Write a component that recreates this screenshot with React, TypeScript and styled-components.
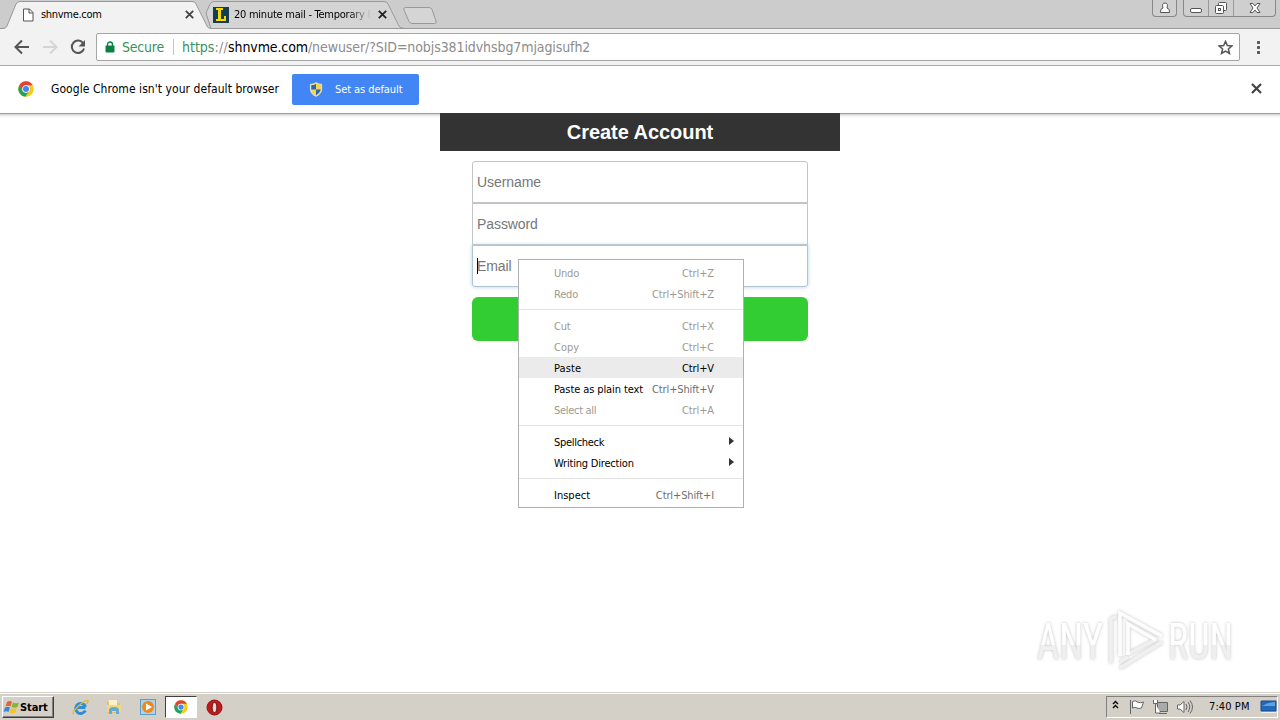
import React from "react";
import styled, { createGlobalStyle } from "styled-components";

const Global = createGlobalStyle`
  * { box-sizing: border-box; }
  body { margin: 0; background: #fff; overflow: hidden; }
`;
const ui = `"DejaVu Sans Condensed", "DejaVu Sans", sans-serif`;

const Screen = styled.div`
  width: 1280px; height: 720px; display: flex; flex-direction: column;
  position: relative; overflow: hidden; font-family: ${ui};
  font-stretch: condensed; font-size: 11px; color: #000; background: #fff;
`;
const Label = styled.span<{ $size?: number; $space?: number; $color?: string }>`
  font-size: ${(p) => p.$size ?? 11}px;
  letter-spacing: ${(p) => p.$space ?? 0}px;
  color: ${(p) => p.$color ?? "inherit"};
  white-space: pre; line-height: 16px;
`;

/* Tab strip */
const TabStrip = styled.div`
  height: 29px; flex: none; background: #ccc; border-bottom: 1px solid #999;
  display: flex; align-items: flex-start; justify-content: space-between;
`;
const TabGroup = styled.div`display: flex;`;
const Tab = styled.div<{ $width: number; $overlap?: number; $front?: boolean }>`
  width: ${(p) => p.$width}px; height: 29px; margin-left: -${(p) => p.$overlap ?? 0}px;
  position: relative; z-index: ${(p) => (p.$front ? 2 : 1)};
`;
const TabShape = styled.svg`position: absolute; inset: 0; display: block;`;
const TabContent = styled.div<{ $left: number; $right: number }>`
  position: relative; display: flex; align-items: center; height: 28px;
  padding: 1px ${(p) => p.$right}px 0 ${(p) => p.$left}px;
`;
const TabTitle = styled.div<{ $gap: number; $fade?: boolean }>`
  flex: 1; min-width: 0; overflow: hidden; margin-left: ${(p) => p.$gap}px; display: flex;
  ${(p) => p.$fade && "mask-image: linear-gradient(90deg, #000 115px, transparent 137px);"}
`;
const NewTab = styled.svg`margin: 7px 0 0 -8px; display: block;`;
const WindowButtons = styled.div`display: flex; gap: 6px; padding-right: 4px;`;
const ButtonSet = styled.div`
  display: flex; height: 17px; border: 1px solid #888; border-top: 0; border-radius: 0 0 4px 4px; background: #cfcfcf;
`;
const WinButton = styled.div<{ $width: number }>`
  width: ${(p) => p.$width}px; display: flex; justify-content: center; align-items: center;
  & + & { border-left: 1px solid #999; }
`;

/* Toolbar */
const Toolbar = styled.div`
  height: 37px; flex: none; background: #f2f2f2; border-bottom: 1px solid #aaa;
  display: flex; align-items: center; padding: 0 15px 0 14px;
`;
const NavIcons = styled.div`display: flex; gap: 12px; width: 82px;`;
const AddressBar = styled.div`
  width: 1144px; height: 28px; background: #fff; border: 1px solid #a5a5a5; border-radius: 2px;
  display: flex; align-items: center; padding: 0 6px 0 8px;
`;
const Secure = styled.div`margin-left: 7px; width: 42px; display: flex;`;
const Divider = styled.i`width: 1px; height: 16px; background: #c4c4c4; margin: 0 8px 0 9px;`;
const Url = styled.div`flex: 1; display: flex;`;
const MenuDots = styled.svg`margin-left: 14px;`;

/* Default browser bar */
const InfoBar = styled.div`
  height: 47px; flex: none; background: #fff; display: flex; align-items: center; padding: 0 18px 2px;
`;
const Message = styled.div`margin-left: 17px; width: 241px; display: flex;`;
const DefaultButton = styled.div`
  width: 127px; height: 31px; margin-top: 1px; border-radius: 2px; background: #4285f4; color: #fff;
  display: flex; align-items: center; padding: 1px 0 0 17px; gap: 12px;
`;
const Spacer = styled.div`flex: 1;`;

/* Page */
const Page = styled.main`
  flex: 1; display: flex; flex-direction: column; align-items: center; background:
  linear-gradient(#9b9b9b 0, #9b9b9b 1px, #d0d0d0 1px, #f2f2f2 3px, #fff 5px);
`;
const Heading = styled.h1`
  margin: 0; width: 400px; height: 38px; background: #333; color: #fff; text-align: center;
  font: bold 20px/38px "Liberation Sans", Arial, sans-serif; letter-spacing: -0.05px;
`;
const Form = styled.form`width: 336px; margin-top: 10px; display: flex; flex-direction: column;`;
const Field = styled.div<{ $pos?: "top" | "bottom" }>`
  height: 42px; border: 1px solid #c4c4c4; background: #fff; color: #777; display: flex; align-items: center;
  padding-left: 4px; font: 14px "Liberation Sans", Arial, sans-serif; letter-spacing: -0.08px;
  border-radius: ${(p) => (p.$pos === "top" ? "3px 3px 0 0" : p.$pos === "bottom" ? "0 0 3px 3px" : "0")};
  ${(p) => p.$pos === "bottom" && "border-color: #b0c4d0; box-shadow: 0 0 4px #b4d3e6;"}
`;
const Caret = styled.i`width: 1px; height: 16px; background: #000; margin-right: -1px;`;
const Submit = styled.div`height: 44px; margin-top: 10px; border-radius: 6px; background: #32cd32;`;

/* Context menu */
const Menu = styled.div`
  position: absolute; left: 518px; top: 259px; width: 226px; height: 249px; background: #fff;
  border: 1px solid #b0b0b0; padding: 2px 0; z-index: 5;
`;
const MenuRow = styled.div<{ $active?: boolean; $disabled?: boolean }>`
  height: 21px; display: flex; align-items: center; justify-content: space-between; padding: 2px 29px 0 35px;
  background: ${(p) => (p.$active ? "#ebebeb" : "transparent")};
  color: ${(p) => (p.$disabled ? "#9d9a8e" : "#000")};
`;
const Separator = styled.div`height: 11px; padding-top: 5px; &::after { content: ""; display: block; height: 1px; background: #e2e2e2; }`;
const Arrow = styled.i`
  border: 4px solid transparent; border-left: 5px solid #333; border-right: 0; margin: -3px -20px 0 0;
`;

const Watermark = styled.svg`position: absolute; left: 1030px; top: 603px;`;

/* Taskbar */
const Taskbar = styled.footer`
  height: 28px; flex: none; background: #d4d0c8; border-top: 1px solid #d4d0c8; box-shadow: inset 0 1px #fff;
  display: flex; align-items: center; padding: 1px 0 0 2px;
`;
const Start = styled.div`
  width: 52px; height: 22px; border: 1px solid; border-color: #fff #404040 #404040 #fff;
  box-shadow: inset -1px -1px #808080; display: flex; align-items: center;
  font: bold 11px ${ui}; font-stretch: condensed; letter-spacing: -0.1px;
`;
const Launchers = styled.div`display: flex; align-items: center; margin-left: 9px; flex: 1;`;
const Launcher = styled.div<{ $active?: boolean }>`
  width: ${(p) => (p.$active ? 32 : 34)}px; height: 22px; display: flex; align-items: center; justify-content: center;
  ${(p) => p.$active && "background: #fff; border: 1px solid; border-color: #404040 #fff #fff #404040;"}
`;
const Tray = styled.div`
  width: 172px; height: 22px; border: 1px solid; border-color: #808080 #fff #fff #808080; margin-right: 2px;
  display: flex; align-items: center; padding-left: 5px;
`;
const Clock = styled.div`margin-left: 13px; display: flex;`;

const Close = ({ color = "#444", size = 9 }) => (
  <svg width={size} height={size} viewBox="0 0 9 9"><path d="M.8.8l7.4 7.4M8.2.8L.8 8.2" stroke={color} strokeWidth="1.8" /></svg>
);
const Chrome = ({ size = 17 }) => (
  <svg width={size} height={size} viewBox="0 0 48 48">
    <circle cx="24" cy="24" r="23" fill="#fbc916" />
    <path d="M4 12.5A23 23 0 0 1 44 12.5H24L14 30z" fill="#dc4437" />
    <path d="M4 12.5A23 23 0 0 0 22 47L34 29.5 24 35 14 30z" fill="#1da462" />
    <circle cx="24" cy="24" r="11.5" fill="#fff" /><circle cx="24" cy="24" r="9" fill="#4285f4" />
  </svg>
);
const Shield = () => (
  <svg width="14" height="15" viewBox="0 0 14 16">
    <path d="M7 .7Q10 2.500 13 2.500V8Q12.5 13 7 15.3 1.5 13 1 8V2.500Q4 2.500 7 .7z" fill="#f7d354" stroke="#e5e5dc" />
    <path d="M7 2V8H2V3.5Q5 3.500 7 2zM7 8h5Q11 12 7 14z" fill="#2869b0" />
  </svg>
);

type Item = { label: string; key?: string; off?: boolean; on?: boolean; sub?: boolean; space?: number } | null;
const items: Item[] = [
  { label: "Undo", key: "Ctrl+Z", off: true },
  { label: "Redo", key: "Ctrl+Shift+Z", off: true },
  null,
  { label: "Cut", key: "Ctrl+X", off: true },
  { label: "Copy", key: "Ctrl+C", off: true, space: 0 },
  { label: "Paste", key: "Ctrl+V", on: true, space: 0.1 },
  { label: "Paste as plain text", key: "Ctrl+Shift+V", space: -0.1 },
  { label: "Select all", key: "Ctrl+A", off: true, space: -0.3 },
  null,
  { label: "Spellcheck", sub: true, space: -0.3 },
  { label: "Writing Direction", sub: true },
  null,
  { label: "Inspect", key: "Ctrl+Shift+I", space: 0 },
];

export default function App() {
  return (
    <Screen>
      <Global />
      <TabStrip>
        <TabGroup>
          <Tab $width={212} $front>
            <TabShape width="212" height="29"><path d="M0 28.5H3Q6 28.5 7 26L16 4Q17.500 1.500 20 1.500H192Q195 1.500 196 4L207 26Q208 28.500 211 28.500V29H0z" fill="#f2f2f2" /><path d="M0 28.5H3Q6 28.5 7 26L16 4Q17.500 1.500 20 1.500H192Q195 1.500 196 4L207 26Q208 28.500 211 28.500" fill="none" stroke="#999" /></TabShape>
            <TabContent $left={22} $right={18}>
              <svg width="12" height="14" viewBox="0 0 12 14"><path d="M1.500 1h6L11 4.500V13H1.500zM7 1v4h4" fill="#fff" stroke="#555" /></svg>
              <TabTitle $gap={7}><Label $space={-0.3}>shnvme.com</Label></TabTitle>
              <Close />
            </TabContent>
          </Tab>
          <Tab $width={208} $overlap={9}>
            <TabShape width="208" height="29"><path d="M3 13L7 4Q8.500 1.500 11 1.500H181Q184 1.500 185 4L196 26Q197 28 201 28.500H8z" fill="#d4d4d4" stroke="#999" /></TabShape>
            <TabContent $left={10} $right={24}>
              <svg width="16" height="16"><path fill="#133f50" d="M0 0h16v16H0z" /><path d="M3 1h7v2H8v9h3V9h2v5H3v-2h2V3H3z" fill="#f8d70b" /></svg>
              <TabTitle $gap={5} $fade><Label $space={-0.25}>20 minute mail - Temporary E</Label></TabTitle>
              <Close color="#222" />
            </TabContent>
          </Tab>
          <NewTab width="38" height="18" viewBox="0 0 38 18"><path d="M2.500.5H26Q28 .5 29 2.500L33 14Q34 16.500 31.500 16.500H9Q7 16.500 6 14.500L1 3Q0 .5 2.500.5z" fill="#d5d5d5" stroke="#999" /></NewTab>
        </TabGroup>
        <WindowButtons>
          <ButtonSet><WinButton $width={23}>
            <svg width="12" height="12" viewBox="0 0 12 12"><path d="M4 6Q2.500 1 6 1T8 6Q11 6.500 10.500 10.500H1.500Q1 6.500 4 6z" fill="#fff" stroke="#555" /></svg>
          </WinButton></ButtonSet>
          <ButtonSet>
            <WinButton $width={24}><svg width="14" height="12"><rect x="1.500" y="6.500" width="11" height="4" rx="1.500" fill="#fff" stroke="#555" /></svg></WinButton>
            <WinButton $width={25}><svg width="14" height="14" fill="#fff" stroke="#555"><rect x="4.500" y="1.500" width="8" height="8" rx="1" /><rect x="1.500" y="4.500" width="8" height="8" rx="1" /><rect x="4.500" y="7.500" width="2" height="2" /></svg></WinButton>
            <WinButton $width={42}><svg width="12" height="12" viewBox="0 0 12 12"><path d="M1 1.500h3L6 4l2-2.500h3L8 6l3 4.500H8L6 8l-2 2.500H1L4 6z" fill="#fff" stroke="#555" /></svg></WinButton>
          </ButtonSet>
        </WindowButtons>
      </TabStrip>
      <Toolbar>
        <NavIcons>
          <svg width="16" height="16" viewBox="0 0 16 16" fill="none" stroke="#555" strokeWidth="2"><path d="M15 8H2.500M8 1.500L1.500 8 8 14.500" /></svg>
          <svg width="16" height="16" viewBox="0 0 16 16" fill="none" stroke="#d5d5d5" strokeWidth="2"><path d="M1 8h12.500M8 1.500L14.500 8 8 14.500" /></svg>
          <svg width="16" height="16" viewBox="0 0 16 16"><path d="M13.300 4.500A6.200 6.200 0 1 0 14 9.500" fill="none" stroke="#555" strokeWidth="2" /><path d="M15 1v6.500H8.500z" fill="#555" /></svg>
        </NavIcons>
        <AddressBar>
          <svg width="10" height="12" viewBox="0 0 10 12"><path d="M2.500 5V3.500a2.500 2.500 0 0 1 5 0V5" fill="none" stroke="#0b8043" strokeWidth="1.400" /><rect x=".5" y="4.500" width="9" height="7" rx="1" fill="#0b8043" /></svg>
          <Secure><Label $size={14} $color="#3a9159" $space={-0.2}>Secure</Label></Secure>
          <Divider />
          <Url>
            <Label $size={14} $color="#3a9159">https</Label>
            <Label $size={14} $color="#8c8c8c" $space={0.3}>://</Label>
            <Label $size={14} $space={-0.1}>shnvme.com</Label>
            <Label $size={14} $color="#8c8c8c" $space={-0.09}>/newuser/?SID=nobjs381idvhsbg7mjagisufh2</Label>
          </Url>
          <svg width="15" height="15" viewBox="0 0 14 14"><path d="M7 1.300l1.700 3.900 4.200.4-3.200 2.800 1 4.200L7 10.400l-3.700 2.200 1-4.200L1.100 5.600l4.200-.4z" fill="none" stroke="#555" strokeWidth="1.400" /></svg>
        </AddressBar>
        <MenuDots width="8" height="14" fill="#555"><rect x="3" y="1" width="3" height="3" rx=".8" /><rect x="3" y="6" width="3" height="3" rx=".8" /><rect x="3" y="11" width="3" height="3" rx=".8" /></MenuDots>
      </Toolbar>
      <InfoBar>
        <Chrome size={16} />
        <Message><Label $size={12} $space={0.06}>Google Chrome isn't your default browser</Label></Message>
        <DefaultButton><Shield /><Label $space={-0.08}>Set as default</Label></DefaultButton>
        <Spacer />
        <Close size={11} />
      </InfoBar>
      <Page>
        <Heading>Create Account</Heading>
        <Form>
          <Field $pos="top">Username</Field>
          <Field>Password</Field>
          <Field $pos="bottom"><Caret />Email</Field>
          <Submit />
        </Form>
      </Page>
      <Menu>
        {items.map((it, i) => it ? (
          <MenuRow key={i} $active={it.on} $disabled={it.off}>
            <Label $space={it.space ?? -0.2}>{it.label}</Label>
            {it.key && <Label $space={-0.12} $color={it.on || it.off ? undefined : "#6f6f6f"}>{it.key}</Label>}
            {it.sub && <Arrow />}
          </MenuRow>
        ) : <Separator key={i} />)}
      </Menu>
      <Watermark width="230" height="76" viewBox="0 0 230 76">
        <defs>
          <linearGradient id="wm" x1="0" y1="0" x2="0" y2="1"><stop offset=".55" stopColor="#fff" /><stop offset=".55" stopColor="#efefef" /></linearGradient>
          <filter id="sh" x="-10%" y="-20%" width="120%" height="140%"><feDropShadow dx="0" dy="0" stdDeviation="1.800" floodColor="#777" floodOpacity=".5" /></filter>
        </defs>
        <g filter="url(#sh)" fontFamily="Roboto, sans-serif" fontSize="50">
          <text x="7" y="56" textLength="66" lengthAdjust="spacingAndGlyphs" fill="url(#wm)">ANY</text>
          <text x="138" y="56" textLength="65" lengthAdjust="spacingAndGlyphs" fill="url(#wm)">RUN</text>
          <g fill="none" strokeWidth="3.600">
            <path d="M81 60V16l5-3M90 65L132 39M98 51L127 36M90 59L98 54" stroke="#f0f0f0" />
            <path d="M90 53V10L132 33M98 52V21L126 37" stroke="#fdfdfd" />
          </g>
        </g>
      </Watermark>
      <Taskbar>
        <Start>
          <svg width="17" height="16" viewBox="0 0 17 16"><path d="M4 3q3-2 5 0L7.500 7.500Q5 6 2.500 7.500z" fill="#e8642c" /><path d="M10 3.500q3 1.500 6 0L14.500 8q-3 1.500-6 0z" fill="#7db73c" /><path d="M2 8.500q3-1.500 5 0L5.500 13Q3 11.500.5 13z" fill="#3b86d6" /><path d="M8 9q3 1.500 6 0l-1.500 4.500q-3 1.500-6 0z" fill="#f5c22b" /></svg>
          Start
        </Start>
        <Launchers>
          <Launcher><svg width="17" height="17" viewBox="0 0 17 17"><path d="M13.500 8.500H5M13.300 11.500A5 5 0 1 1 13.500 8" fill="none" stroke="#2f8fd6" strokeWidth="3" /><path d="M2 15.500Q-1 14 6 7.500T16 1.500Q16.500 2.500 14.500 5" fill="none" stroke="#e2b93a" strokeWidth="1.300" /></svg></Launcher>
          <Launcher><svg width="16" height="16"><path d="M1 3h5l1 1h7v10H1z" fill="#e3c264" /><path d="M3 1h8v6H3z" fill="#f9f2c8" /><path d="M1 6h14v7H1z" fill="#f1d980" /><path d="M3 15v-4q0-3 5-3t5 3v4h-3v-3H6v3z" fill="#62abd9" /></svg></Launcher>
          <Launcher><svg width="16" height="16"><rect x=".5" y=".5" width="15" height="15" fill="#a9d3ef" stroke="#5c9cc9" /><circle cx="8" cy="8" r="6" fill="#ee8a1d" /><path d="M6 4.500L12 8l-6 3.500z" fill="#fff" /></svg></Launcher>
          <Launcher $active><Chrome size={14} /></Launcher>
          <Launcher><svg width="17" height="17" viewBox="0 0 17 17"><circle cx="8.500" cy="8.500" r="7.500" fill="#c01a1f" stroke="#8d1414" /><ellipse cx="8.500" cy="8.500" rx="2.300" ry="5" fill="#e4dcd4" stroke="#6c1010" /></svg></Launcher>
        </Launchers>
        <Tray>
          <svg width="84" height="20" viewBox="0 0 84 20" fill="none" stroke="#666">
            <path d="M1 7l2.500-2.500L6 7M1 11L3.500 8.500 6 11" stroke="#000" strokeWidth="1.400" />
            <path d="M18.500 3v14M20.500 4.500q3-1.500 5 .5 3 1.500 6 0l-2 6q-3 1-4.500 0-2-1.500-4.500 0z" fill="#fff" />
            <path d="M45.500 5.500h10v9h-10zM47 16.500h8" fill="#aaa" /><path d="M41.500 3v3.500h4V3M43.500 7v9h5" fill="#fff" />
            <path d="M65.500 8v4h2.500l4 3.500v-11L68 8z" fill="#fff" /><path d="M74 7q2 3 0 6M76 5q3.500 5 0 10M78 3.500q5 6.500 0 13" />
          </svg>
          <Clock><Label $space={0.1}>7:40 PM</Label></Clock>
          <Spacer />
          <svg width="17" height="14"><path d="M1 1h15v10H1z" fill="#2469b8" stroke="#184a91" /><path d="M2 6Q9 2 15 2v4z" fill="#5ca4df" /><path d="M1 12.500h15" stroke="#eee" /></svg>
        </Tray>
      </Taskbar>
    </Screen>
  );
}
